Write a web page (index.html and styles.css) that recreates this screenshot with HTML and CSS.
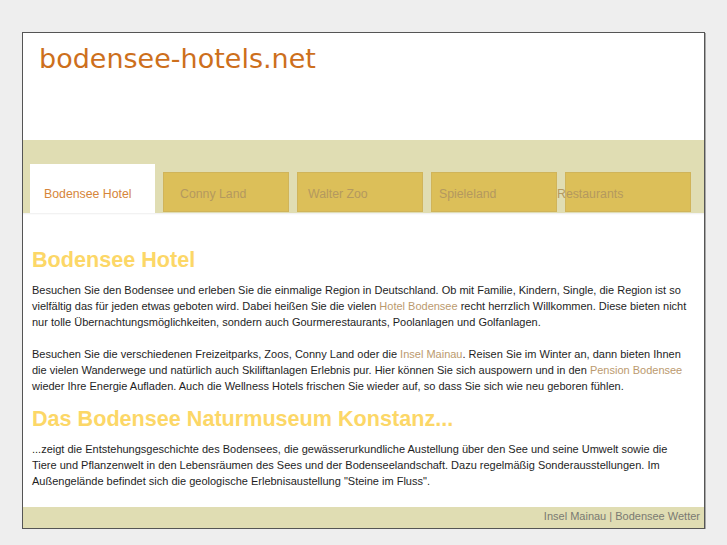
FILE: index.html
```html
<!DOCTYPE html>
<html lang="de">
<head>
<meta charset="utf-8">
<title>bodensee-hotels.net</title>
<link rel="stylesheet" href="styles.css">
</head>
<body>
<div class="page">
  <div class="header">
    <div class="logo">bodensee-hotels.net</div>
  </div>
  <div class="nav">
    <a class="tab tab-active">Bodensee Hotel</a>
    <a class="tab tab-2">Conny Land</a>
    <a class="tab tab-3">Walter Zoo</a>
    <a class="tab tab-4">Spieleland</a>
    <a class="tab tab-5">Restaurants</a>
  </div>
  <div class="content">
    <h1 class="heading heading-first">Bodensee Hotel</h1>
    <p class="text">Besuchen Sie den Bodensee und erleben Sie die einmalige Region in Deutschland. Ob mit Familie, Kindern, Single, die Region ist so vielfältig das für jeden etwas geboten wird. Dabei heißen Sie die vielen <a class="link">Hotel Bodensee</a> recht herrzlich Willkommen. Diese bieten nicht nur tolle Übernachtungsmöglichkeiten, sondern auch Gourmerestaurants, Poolanlagen und Golfanlagen.</p>
    <p class="text">Besuchen Sie die verschiedenen Freizeitparks, Zoos, Conny Land oder die <a class="link">Insel Mainau</a>. Reisen Sie im Winter an, dann bieten Ihnen die vielen Wanderwege und natürlich auch Skiliftanlagen Erlebnis pur. Hier können Sie sich auspowern und in den <a class="link">Pension Bodensee</a> wieder Ihre Energie Aufladen. Auch die Wellness Hotels frischen Sie wieder auf, so dass Sie sich wie neu geboren fühlen.</p>
    <h2 class="heading heading-second">Das Bodensee Naturmuseum Konstanz...</h2>
    <p class="text">...zeigt die Entstehungsgeschichte des Bodensees, die gewässerurkundliche Austellung über den See und seine Umwelt sowie die Tiere und Pflanzenwelt in den Lebensräumen des Sees und der Bodenseelandschaft. Dazu regelmäßig Sonderausstellungen. Im Außengelände befindet sich die geologische Erlebnisaustellung "Steine im Fluss".</p>
  </div>
  <div class="footer">Insel Mainau | Bodensee Wetter</div>
</div>
</body>
</html>
```

FILE: styles.css
```css
html, body {
  margin: 0;
  padding: 0;
  background: #eeeeee;
}

body {
  padding: 32px 0 0 22px;
  font-family: "Liberation Sans", Arial, sans-serif;
}

.page {
  width: 681px;
  border: 1px solid #555555;
  box-shadow: 1px 1px 0 #a8a8a8;
  background: #ffffff;
}

.header {
  height: 107px;
  box-sizing: border-box;
  padding: 10px 0 0 16px;
}

.logo {
  font-family: "DejaVu Sans", Verdana, sans-serif;
  font-size: 27px;
  color: #cd6f1c;
}

.nav {
  height: 73px;
  background: #e0ddb3;
  display: flex;
  align-items: flex-end;
  gap: 8px;
  padding-left: 7px;
}

.tab {
  box-sizing: border-box;
  width: 126px;
  height: 40px;
  margin-bottom: 1px;
  padding-top: 2px;
  line-height: 38px;
  font-size: 12.3px;
  color: #b4995f;
  background: #dcbf59;
  border: 1px solid #d0b45a;
  white-space: nowrap;
  overflow: visible;
}

.tab-active {
  width: 125px;
  height: 49px;
  margin-bottom: 0;
  padding: 11px 0 0 14px;
  line-height: 38px;
  background: #ffffff;
  border: none;
  color: #d6853a;
}

.tab-2 { padding-left: 16px; }
.tab-3 { padding-left: 10px; }
.tab-4 { padding-left: 7px; }
.tab-5 { text-indent: -9px; }

.content {
  padding: 34px 10px 18px 9px;
  box-shadow: inset 0 2px 2px -1px rgba(0, 0, 0, 0.07);
}

.heading {
  margin: 0;
  font-size: 21.6px;
  font-weight: bold;
  line-height: 25px;
  color: #fcd767;
}

.heading-first {
  margin-bottom: 10px;
}

.heading-second {
  margin-top: 12px;
  margin-bottom: 10px;
}

.text {
  margin: 0;
  font-size: 11px;
  line-height: 16px;
  color: #1e1e1e;
}

.text + .text {
  margin-top: 16px;
}

.link {
  color: #bb9a6e;
}

.footer {
  height: 21px;
  background: #e0ddb3;
  text-align: right;
  padding-right: 4px;
  font-size: 11px;
  line-height: 18px;
  color: #7a7a72;
}
```
